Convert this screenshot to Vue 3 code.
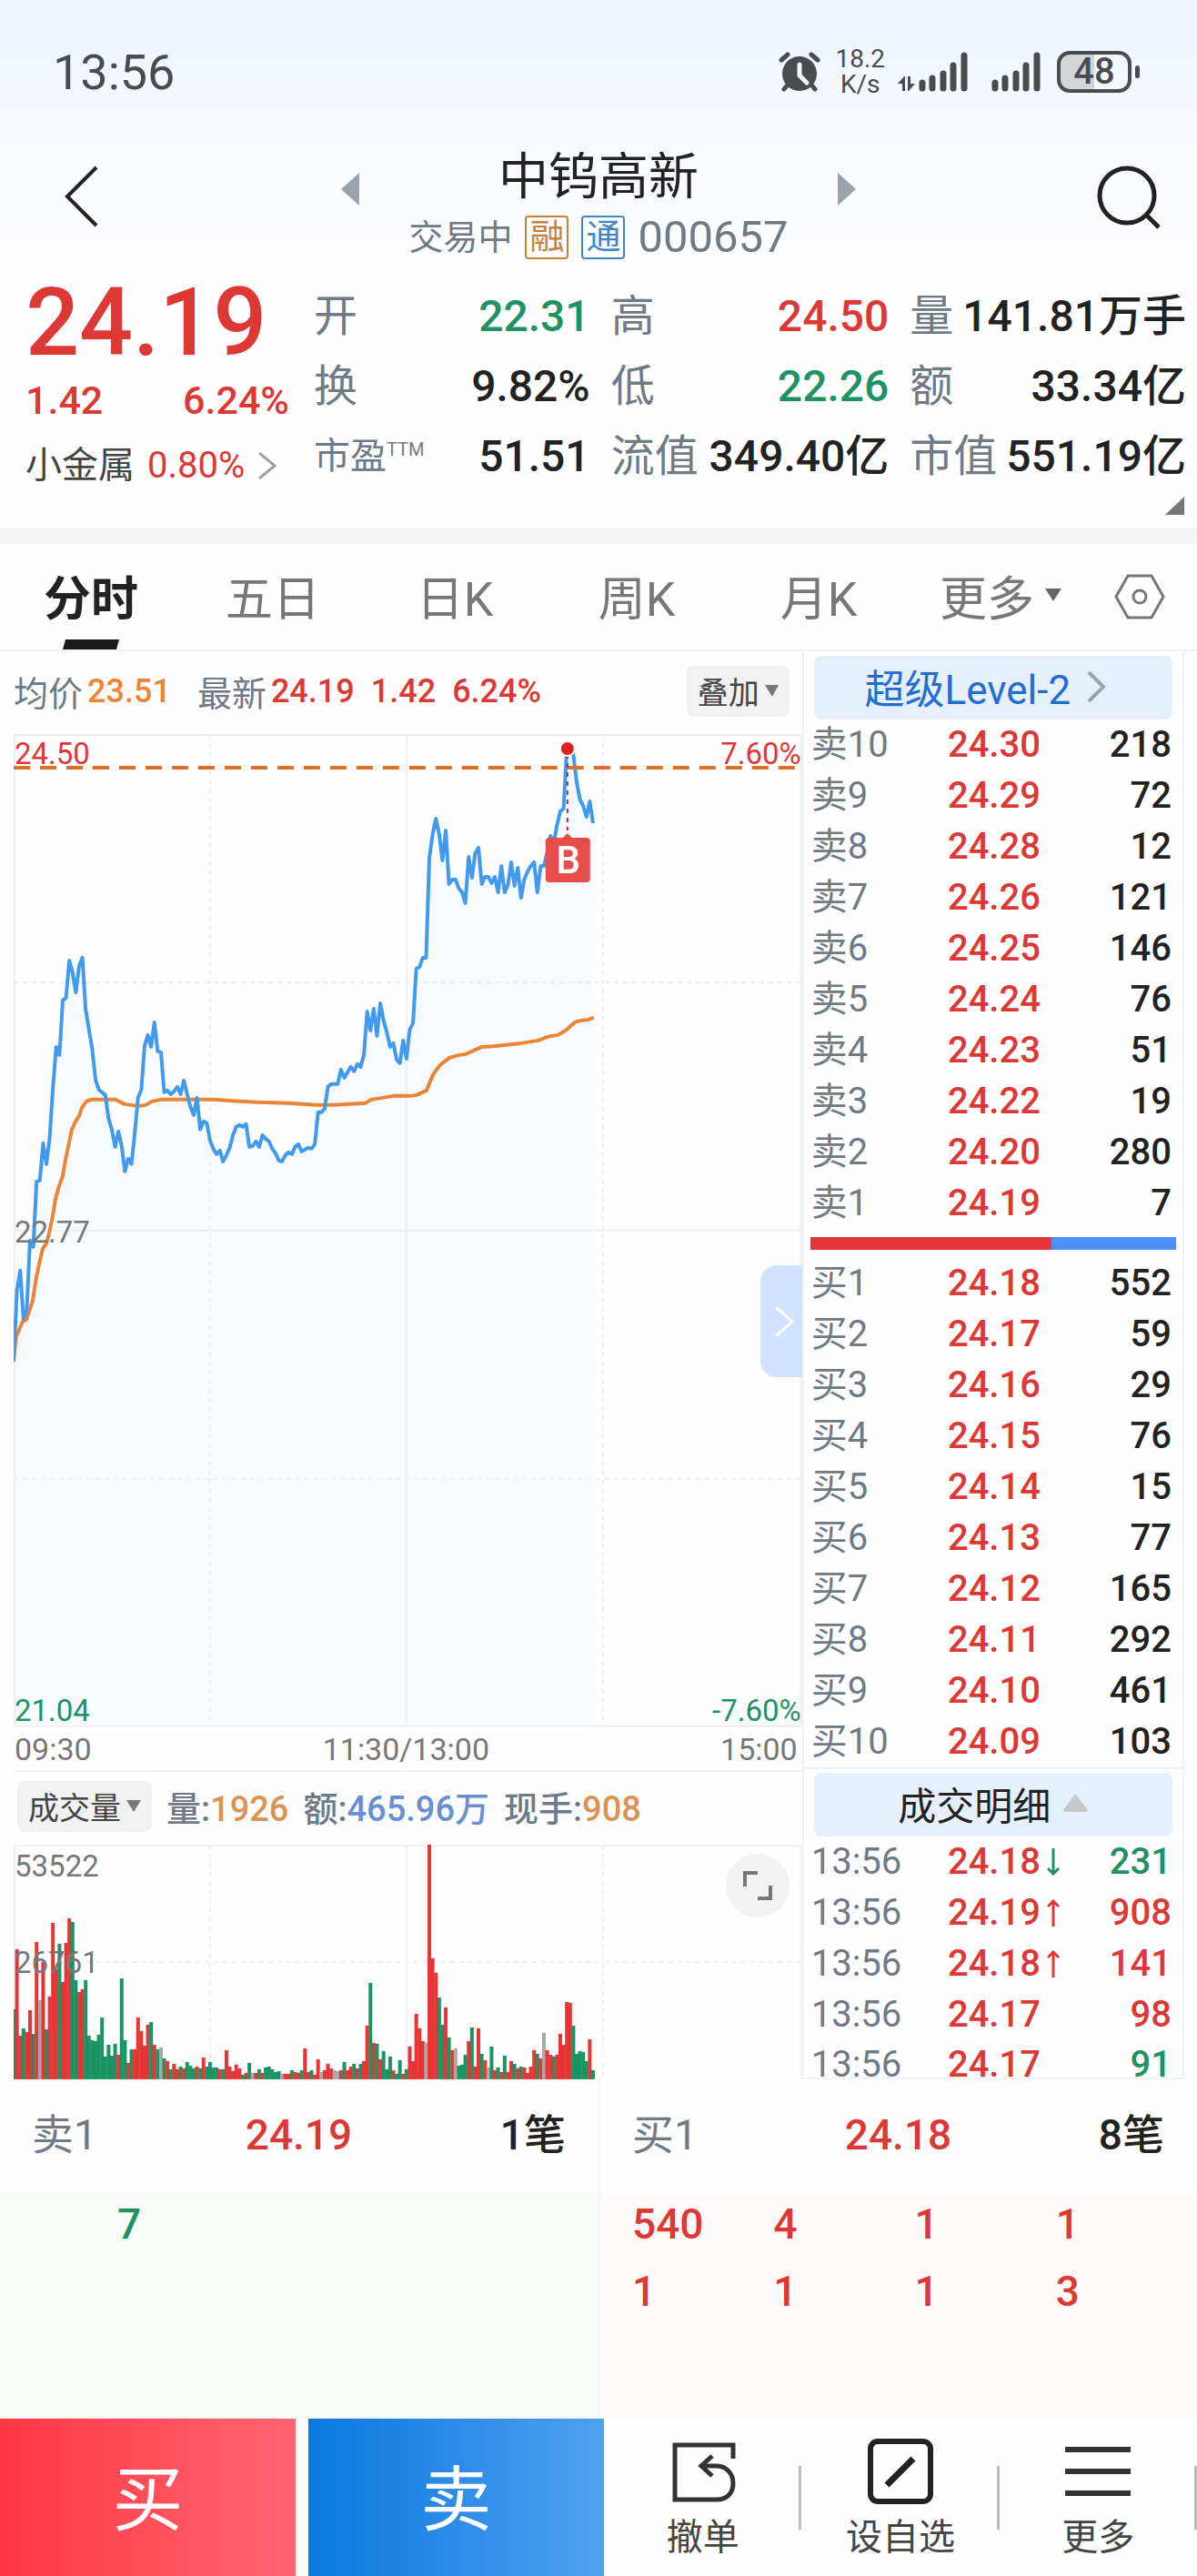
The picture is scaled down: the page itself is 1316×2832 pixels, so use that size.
<script setup>
const quotes = [
  { label: '开', value: '22.31', tone: 'down' },
  { label: '高', value: '24.50', tone: 'up' },
  { label: '量', value: '141.81万手', tone: '' },
  { label: '换', value: '9.82%', tone: '' },
  { label: '低', value: '22.26', tone: 'down' },
  { label: '额', value: '33.34亿', tone: '' },
  { label: '市盈', sup: 'TTM', value: '51.51', tone: '' },
  { label: '流值', value: '349.40亿', tone: '' },
  { label: '市值', value: '551.19亿', tone: '' },
]

const tabs = ['分时', '五日', '日K', '周K', '月K']

const asks = [
  ['卖10', '24.30', '218'],
  ['卖9', '24.29', '72'],
  ['卖8', '24.28', '12'],
  ['卖7', '24.26', '121'],
  ['卖6', '24.25', '146'],
  ['卖5', '24.24', '76'],
  ['卖4', '24.23', '51'],
  ['卖3', '24.22', '19'],
  ['卖2', '24.20', '280'],
  ['卖1', '24.19', '7'],
]

const bids = [
  ['买1', '24.18', '552'],
  ['买2', '24.17', '59'],
  ['买3', '24.16', '29'],
  ['买4', '24.15', '76'],
  ['买5', '24.14', '15'],
  ['买6', '24.13', '77'],
  ['买7', '24.12', '165'],
  ['买8', '24.11', '292'],
  ['买9', '24.10', '461'],
  ['买10', '24.09', '103'],
]

const ticks = [
  { time: '13:56', price: '24.18', dir: 'down', qty: '231', tone: 'down' },
  { time: '13:56', price: '24.19', dir: 'up', qty: '908', tone: 'up' },
  { time: '13:56', price: '24.18', dir: 'up', qty: '141', tone: 'up' },
  { time: '13:56', price: '24.17', dir: '', qty: '98', tone: 'up' },
  { time: '13:56', price: '24.17', dir: '', qty: '91', tone: 'down' },
]

const bidOrders = ['540', '4', '1', '1', '1', '1', '1', '3']

/* One sample per trading minute, 240 minutes across the chart */
const STEP = 3.6
const price = [
  690, 612, 590, 643, 633, 557, 564, 492, 491, 450, 473, 444, 389, 344, 353, 293, 290, 249, 262, 284,
  255, 246, 303, 325, 346, 380, 391, 394, 397, 423, 435, 454, 437, 453, 481, 467, 473, 439, 400, 391,
  343, 331, 344, 317, 349, 350, 394, 392, 396, 393, 388, 396, 381, 396, 410, 419, 400, 435, 426, 428,
  447, 456, 462, 458, 470, 463, 455, 441, 432, 430, 432, 429, 454, 453, 448, 454, 441, 445, 448, 456,
  461, 469, 470, 463, 460, 462, 454, 451, 459, 457, 455, 456, 451, 416, 416, 412, 388, 385, 385, 385,
  369, 378, 372, 366, 371, 363, 366, 353, 305, 326, 302, 332, 296, 315, 328, 344, 340, 358, 362, 337,
  357, 325, 318, 258, 256, 246, 246, 136, 110, 93, 110, 139, 106, 165, 160, 160, 170, 174, 186, 135,
  158, 131, 125, 165, 157, 157, 164, 157, 174, 145, 174, 166, 141, 167, 147, 180, 160, 151, 145, 141,
  174, 145, 145, 130, 112, 120, 100, 85, 82, 16, 16, 23, 53, 72, 79, 91, 74, 98,
]
const pricePoints = price.map((y, i) => `${(i * STEP).toFixed(1)},${y}`).join(' ')
const lastX = ((price.length - 1) * STEP).toFixed(1)
const areaPoints = `0,1092 ${pricePoints} ${lastX},1092`

const averagePoints =
  '0,686 3,662 10,646 14,644 21,623 25,597 28,583 32,566 36,560 39,549 43,530 46,511 50,497 54,486 57,468 ' +
  '64,435 68,426 72,420 75,411 80,404 85,402 112,402 122,407 137,409 145,408 152,404 162,402 218,402 268,405 ' +
  '302,406 332,408 352,408 387,406 393,402 418,398 436,398 443,397 454,392 461,375 465,369 469,364 479,356 ' +
  '490,353 497,352 515,344 530,343 558,340 577,337 587,333 598,331 607,326 617,317 624,315 632,314 638,312'

/* Volume bars: height plus r (rise), g (fall) or n (flat) */
const volume = (
  '77g 143r 48r 56g 52r 76r 50g 151r 87n 129r 55g 91r 172r 121r 149g 107r 150r 177r 173g 109g ' +
  '96r 99r 109g 48g 43g 42g 49g 68g 25g 38g 26g 39g 27r 111g 43g 18r 33g 33r 68r 53r ' +
  '37r 60r 63g 38r 33g 35n 23g 20r 11g 17r 11r 14g 12r 19g 15g 12g 14r 12g 24r 14g ' +
  '19g 13g 13g 11r 11g 32r 14r 9r 16r 12r 5g 7r 18g 7n 7r 11g 7r 13g 14g 11g ' +
  '8g 9g 6n 6r 6r 10g 8r 7r 10g 34r 8r 10g 5r 22r 8n 10r 17r 12r 10n 9n ' +
  '10r 19g 10r 14r 17g 12r 17g 20r 59r 106g 40r 39g 22r 31g 11g 25g 10r 6g 21g 6r ' +
  '11g 36r 20r 72r 56r 42r 40n 258r 133r 117r 90g 60g 79r 46g 32r 34n 15g 16g 27g 42r ' +
  '57g 14r 56r 28g 21r 13n 36g 10r 13g 8r 26g 8r 20r 17g 12r 14g 13r 7r 14r 32r ' +
  '28g 23r 51n 32r 27r 25g 27r 50r 38r 85r 84r 59g 28g 31g 30g 20g 44r 10g'
)
  .split(' ')
  .map((s, i) => ({ h: parseInt(s, 10), kind: s.slice(-1), x: (i * STEP - 2).toFixed(1) }))
const barColor = { r: '#e63534', g: '#1b9464', n: '#a9a9a9' }
</script>

<template>
  <div class="page">
    <header class="top">
      <div class="status">
        <span class="clock">13:56</span>
        <svg class="alarm" width="46" height="44" viewBox="0 0 46 44">
          <circle cx="23" cy="24" r="19" fill="#4a4b4c" />
          <path d="M3 9l7-6M43 9l-7-6M6 41l5-6M40 41l-5-6" stroke="#4a4b4c" stroke-width="5" stroke-linecap="round" />
          <path d="M23 14v12l8 8" fill="none" stroke="#f3f7fe" stroke-width="5" stroke-linecap="round" stroke-linejoin="round" />
        </svg>
        <span class="speed"><span>18.2</span><span>K/s</span></span>
        <svg class="signal" width="77" height="44" viewBox="0 0 77 44">
          <path d="M0 35l7-8h1v16H5v-8zM19 35l-7 8h-1V27h3v8z" fill="#4a4b4c" />
          <path d="M27 34v6M38 29v11M50 24v16M61 15v25M73 4v36" stroke="#4a4b4c" stroke-width="7" stroke-linecap="round" />
        </svg>
        <svg class="signal2" width="54" height="44" viewBox="0 0 54 44">
          <path d="M4 34v6M15 29v11M27 24v16M38 15v25M50 4v36" stroke="#4a4b4c" stroke-width="7" stroke-linecap="round" />
        </svg>
        <span class="battery">48</span>
        <i class="nub"></i>
      </div>
      <div class="title-bar">
        <button class="icon-btn back" aria-label="返回">
          <svg width="40" height="68" viewBox="0 0 40 68"><path d="M36 2L4 34l32 32" fill="none" stroke="#222" stroke-width="4" /></svg>
        </button>
        <div class="switcher">
          <button class="icon-btn" aria-label="上一只">
            <svg width="20" height="36" viewBox="0 0 20 36"><path d="M20 0v36L0 18z" fill="#9aa3ad" /></svg>
          </button>
          <div class="title">
            <h1>中钨高新</h1>
            <p class="sub">
              <span>交易中</span><b class="badge orange">融</b><b class="badge blue">通</b><span class="code">000657</span>
            </p>
          </div>
          <button class="icon-btn" aria-label="下一只">
            <svg width="20" height="36" viewBox="0 0 20 36"><path d="M0 0v36l20-18z" fill="#9aa3ad" /></svg>
          </button>
        </div>
        <button class="icon-btn search" aria-label="搜索">
          <svg width="72" height="70" viewBox="0 0 72 70">
            <circle cx="33" cy="33" r="30" fill="none" stroke="#222" stroke-width="5" />
            <path d="M54 54l14 14" stroke="#222" stroke-width="5" />
          </svg>
        </button>
      </div>
    </header>

    <section class="quote">
      <div class="last">
        <strong class="big up">24.19</strong>
        <div class="chg up"><span>1.42</span><span>6.24%</span></div>
        <a href="#" class="sector">
          小金属 <span class="up">0.80%</span>
          <svg width="22" height="30" viewBox="0 0 22 30"><path d="M2 1l17 14L2 29" fill="none" stroke="#9aa3ad" stroke-width="3" /></svg>
        </a>
      </div>
      <dl class="stats">
        <div v-for="q in quotes" :key="q.label">
          <dt :class="{ small: q.sup }">{{ q.label }}<sup v-if="q.sup">{{ q.sup }}</sup></dt>
          <dd :class="q.tone">{{ q.value }}</dd>
        </div>
      </dl>
      <svg class="corner" width="21" height="20" viewBox="0 0 21 20"><path d="M21 0v20H0z" fill="#777" /></svg>
    </section>

    <nav class="tabs">
      <button v-for="(t, i) in tabs" :key="t" :class="{ active: i === 0 }">
        {{ t }}
        <svg v-if="i === 0" class="mark" width="62" height="11" viewBox="0 0 62 11"><path d="M3 0h59l-3 11H0z" fill="#1b1b1b" /></svg>
      </button>
      <button class="more">
        更多<svg width="18" height="14" viewBox="0 0 18 14"><path d="M0 0h18L9 14z" fill="#666" /></svg>
      </button>
      <button class="gear" aria-label="设置">
        <svg width="56" height="50" viewBox="0 0 56 50">
          <path d="M15 2h26l13 23-13 23H15L2 25z" fill="none" stroke="#777" stroke-width="3" stroke-linejoin="round" />
          <circle cx="28" cy="25" r="7" fill="none" stroke="#777" stroke-width="3" />
        </svg>
      </button>
    </nav>

    <main class="board">
      <section class="left">
        <div class="info">
          <span class="muted">均价</span><b class="avg">23.51</b>
          <span class="muted latest">最新</span><b class="up">24.19</b><b class="up gap">1.42</b><b class="up gap">6.24%</b>
          <button class="chip">叠加<svg width="15" height="13" viewBox="0 0 15 13"><path d="M0 0h15L8 13z" fill="#777" /></svg></button>
        </div>

        <div class="chart">
          <svg class="plot" viewBox="0 0 867 1092">
            <polygon :points="areaPoints" fill="#f7fbff" />
            <g fill="none" stroke="#ebeff0" stroke-width="2">
              <path d="M0 546H867M432 0V1092" />
              <path d="M0 273H867M0 819H867M216 0V1092M648 0V1092" stroke-dasharray="5 5" />
              <path d="M1 1H866V1091H1z" />
            </g>
            <polyline :points="averagePoints" fill="none" stroke="#ec8436" stroke-width="4" stroke-linejoin="round" />
            <polyline :points="pricePoints" fill="none" stroke="#429aee" stroke-width="4" stroke-linejoin="round" />
            <path d="M0 37H867" stroke="#dc7028" stroke-width="4" stroke-dasharray="18 11" />
            <path d="M609 22V106" stroke="#a03040" stroke-width="2" stroke-dasharray="5 5" />
            <circle cx="609" cy="16" r="8" fill="#dc2020" stroke="#fff" stroke-width="2" />
            <path d="M603 115l6-6 6 6z" fill="#e54d4b" />
            <rect x="585" y="114" width="49" height="49" rx="4" fill="#e54d4b" />
            <text x="610" y="153" class="mark-b" text-anchor="middle">B</text>
          </svg>
          <div class="scale start"><span class="up">24.50</span><span>22.77</span><span class="down">21.04</span></div>
          <div class="scale end"><span class="up">7.60%</span><span class="down">-7.60%</span></div>
          <button class="drawer" aria-label="收起">
            <svg width="22" height="36" viewBox="0 0 22 36"><path d="M2 2l18 16L2 34" fill="none" stroke="#fff" stroke-width="3" /></svg>
          </button>
        </div>
        <div class="axis"><span>09:30</span><span>11:30/13:00</span><span>15:00</span></div>

        <div class="vol-head">
          <button class="chip">成交量<svg width="16" height="13" viewBox="0 0 16 13"><path d="M0 0h16L8 13z" fill="#777" /></svg></button>
          <span>量:<b class="sand">1926</b></span>
          <span>额:<b class="sky">465.96万</b></span>
          <span>现手:<b class="sand">908</b></span>
        </div>
        <div class="chart">
          <svg class="plot" viewBox="0 0 867 258">
            <g fill="none" stroke="#f0f1f2" stroke-width="2">
              <path d="M432 0V258M1 258V1H866V258" />
              <path d="M0 129H867M216 0V258M648 0V258" stroke-dasharray="5 5" />
            </g>
            <rect v-for="(b, i) in volume" :key="i" :x="b.x" :y="258 - b.h" width="4" :height="b.h" :fill="barColor[b.kind]" />
          </svg>
          <div class="scale vol"><span>53522</span><span>26761</span></div>
          <button class="expand" aria-label="全屏">
            <svg width="32" height="32" viewBox="0 0 32 32"><path d="M16 2H2v15M16 30h14V16" fill="none" stroke="#777" stroke-width="4" /></svg>
          </button>
        </div>
      </section>

      <aside class="right">
        <button class="level">
          超级Level-2
          <svg width="22" height="34" viewBox="0 0 22 34"><path d="M2 1l16 16L2 33" fill="none" stroke="#9aa3ad" stroke-width="4" /></svg>
        </button>
        <table class="book">
          <tbody>
            <tr v-for="r in asks" :key="r[0]"><th>{{ r[0] }}</th><td class="up">{{ r[1] }}</td><td>{{ r[2] }}</td></tr>
          </tbody>
        </table>
        <div class="ratio"><i></i></div>
        <table class="book">
          <tbody>
            <tr v-for="r in bids" :key="r[0]"><th>{{ r[0] }}</th><td class="up">{{ r[1] }}</td><td>{{ r[2] }}</td></tr>
          </tbody>
        </table>
        <div class="detail">
          <button class="level dark">
            成交明细
            <svg width="27" height="20" viewBox="0 0 27 20"><path d="M13 0l14 18-2 2H2l-2-2z" fill="#c8c8c8" /></svg>
          </button>
          <table class="book">
            <tbody>
              <tr v-for="(t, i) in ticks" :key="i">
                <th>{{ t.time }}</th>
                <td class="up">
                  {{ t.price }}<svg v-if="t.dir" :class="['arrow', t.dir]" width="14" height="30" viewBox="0 0 14 30">
                    <path :d="t.dir === 'up' ? 'M7 30V2M1 8l6-6 6 6' : 'M7 0v28M1 22l6 6 6-6'" fill="none" stroke="currentColor" stroke-width="3" />
                  </svg>
                </td>
                <td :class="t.tone">{{ t.qty }}</td>
              </tr>
            </tbody>
          </table>
        </div>
      </aside>
    </main>

    <section class="queues">
      <div class="queue">
        <div class="q-head"><span>卖1</span><b class="up">24.19</b><b>1笔</b></div>
        <div class="q-body sell"><span class="down">7</span></div>
      </div>
      <div class="queue">
        <div class="q-head"><span>买1</span><b class="up">24.18</b><b>8笔</b></div>
        <div class="q-body buy"><span v-for="(n, i) in bidOrders" :key="i" class="up">{{ n }}</span></div>
      </div>
    </section>

    <footer class="bottom">
      <button class="trade red">买</button>
      <button class="trade azure">卖</button>
      <div class="tools">
        <button>
          <svg width="72" height="72" viewBox="0 0 72 72">
            <path d="M69 22V7H5v60h46c12 0 18-8 18-18 0-11-8-19-18-19H35" fill="none" stroke="#333" stroke-width="5" />
            <path d="M46 19L34 30l12 11" fill="none" stroke="#333" stroke-width="5" />
          </svg>
          撤单
        </button>
        <button>
          <svg width="72" height="72" viewBox="0 0 72 72">
            <rect x="3" y="3" width="66" height="66" rx="8" fill="none" stroke="#222" stroke-width="6" />
            <path d="M21 51l29-29" stroke="#222" stroke-width="7" />
          </svg>
          设自选
        </button>
        <button>
          <svg width="72" height="72" viewBox="0 0 72 72"><path d="M0 12h72M0 36h72M0 60h72" stroke="#333" stroke-width="6" /></svg>
          更多
        </button>
      </div>
    </footer>
  </div>
</template>

<style>
body {
  margin: 0;
  background: #fdfefe;
}
</style>

<style scoped>
.page {
  font-family: Roboto, "Noto Sans CJK SC", sans-serif;
  color: #222;
  background: #fefefe;
}
.page * {
  box-sizing: border-box;
}
button {
  padding: 0;
  border: 0;
  background: none;
  font: inherit;
  color: inherit;
}
svg {
  display: block;
  flex: none;
}
b {
  font-weight: 500;
}
.up {
  color: #dc3836;
}
.down {
  color: #1f9163;
}
.muted {
  color: #6f7a86;
}

/* Top */
.top {
  height: 298px;
  background: linear-gradient(#eef5fe, #fefefe);
}
.status {
  display: flex;
  align-items: center;
  height: 158px;
  padding: 0 63px 0 58px;
  color: #4a4b4c;
}
.clock {
  margin-right: auto;
  font-size: 54px;
}
.speed {
  display: flex;
  flex-direction: column;
  margin: 0 14px 0 16px;
  font-size: 28px;
  line-height: 28px;
  text-align: center;
}
.signal2 {
  margin: 0 18px 0 26px;
}
.battery {
  width: 82px;
  height: 46px;
  border: 4px solid #4a4b4c;
  border-radius: 14px;
  background: linear-gradient(90deg, #d2d4d8 50%, transparent 50%);
  font-size: 40px;
  font-weight: 500;
  line-height: 38px;
  text-align: center;
}
.nub {
  width: 5px;
  height: 14px;
  margin-left: 4px;
  border-radius: 3px;
  background: #4a4b4c;
}
.title-bar {
  display: flex;
  align-items: flex-start;
  justify-content: space-between;
  padding: 0 38px 0 70px;
}
.icon-btn {
  margin-top: 32px;
}
.back,
.search {
  margin-top: 24px;
}
.switcher {
  display: flex;
  align-items: flex-start;
  justify-content: space-between;
  width: 566px;
}
.title {
  text-align: center;
}
h1 {
  margin: 0;
  font-size: 55px;
  font-weight: 400;
  line-height: 72px;
}
.sub {
  display: flex;
  align-items: center;
  justify-content: center;
  gap: 14px;
  margin: 7px 0 0;
  font-size: 38px;
  line-height: 48px;
  color: #6f7a86;
}
.badge {
  width: 48px;
  height: 48px;
  border: 2px solid;
  border-radius: 4px;
  font-size: 38px;
  font-weight: 400;
  line-height: 42px;
  text-align: center;
}
.orange {
  color: #c8803a;
}
.blue {
  color: #3f87c5;
}
.code {
  font-size: 49px;
}

/* Quote */
.quote {
  position: relative;
  display: flex;
  gap: 27px;
  height: 300px;
  padding: 12px 12px 0 28px;
  border-bottom: 18px solid #f4f4f4;
}
.last {
  flex: none;
  width: 290px;
}
.big {
  display: block;
  font-size: 104px;
  font-weight: 500;
  line-height: 90px;
}
.chg {
  display: flex;
  justify-content: space-between;
  margin-top: 16px;
  font-size: 43px;
  font-weight: 500;
  line-height: 48px;
}
.sector {
  display: flex;
  align-items: center;
  gap: 14px;
  margin-top: 24px;
  font-size: 40px;
  line-height: 48px;
  color: #444;
  text-decoration: none;
  white-space: nowrap;
}
.stats {
  flex: 1;
  display: grid;
  grid-template-columns: 304fr 306fr 304fr;
  grid-auto-rows: 77px;
  column-gap: 23px;
  margin: 0;
  font-size: 48px;
  line-height: 76px;
}
.stats div {
  display: flex;
  justify-content: space-between;
  white-space: nowrap;
}
dt {
  color: #6f7a86;
}
dt.small {
  font-size: 40px;
}
sup {
  font-size: 20px;
  line-height: 20px;
}
dd {
  margin: 0;
  font-weight: 500;
}
.corner {
  position: absolute;
  right: 14px;
  bottom: 14px;
}

/* Tabs */
.tabs {
  display: flex;
  height: 118px;
  border-bottom: 2px solid #f1f2f2;
  font-size: 52px;
  color: #777;
}
.tabs button {
  position: relative;
  flex: 1;
  display: flex;
  align-items: center;
  justify-content: center;
  padding-bottom: 4px;
}
.tabs .active {
  font-weight: 700;
  color: #222;
}
.mark {
  position: absolute;
  bottom: 0;
  left: 50%;
  margin-left: -31px;
}
.more svg {
  margin-left: 12px;
}
.tabs .gear {
  flex: 0 0 116px;
  padding: 0 10px 0 0;
}

/* Chart side */
.board {
  display: grid;
  grid-template-columns: 67% 33%;
}
.left {
  min-width: 0;
  padding-left: 15px;
}
.info,
.vol-head {
  display: flex;
  align-items: center;
  padding-bottom: 4px;
  font-size: 38px;
}
.info {
  height: 91px;
}
.info b {
  margin-left: 5px;
  font-size: 36px;
}
.info .avg {
  margin-right: 29px;
  color: #ec8436;
}
.info .gap {
  margin-left: 18px;
}
.chip {
  display: flex;
  align-items: center;
  gap: 6px;
  height: 56px;
  padding: 0 12px;
  border-radius: 8px;
  background: #f1f1f1;
  font-size: 34px;
  color: #444;
}
.info .chip {
  margin: 0 14px 0 auto;
}
.chart {
  position: relative;
}
.plot {
  width: 100%;
  height: auto;
}
.mark-b {
  font-size: 42px;
  font-weight: 500;
  fill: #fff;
}
.scale {
  position: absolute;
  top: 4px;
  bottom: 0;
  left: 1px;
  display: flex;
  flex-direction: column;
  justify-content: space-between;
  font-size: 33px;
  line-height: 36px;
  color: #777;
}
.end {
  right: 1px;
  left: auto;
  text-align: right;
}
.scale.vol {
  bottom: 110px;
  top: 6px;
}
.drawer {
  position: absolute;
  right: 0;
  top: 584px;
  display: flex;
  align-items: center;
  justify-content: center;
  width: 46px;
  height: 123px;
  padding-left: 6px;
  border-radius: 18px 0 0 18px;
  background: #d0e2fc;
}
.axis {
  display: flex;
  justify-content: space-between;
  height: 49px;
  padding: 0 5px 0 1px;
  border-bottom: 2px solid #eef1f2;
  font-size: 34px;
  line-height: 48px;
  color: #777;
}
.vol-head {
  gap: 16px;
  height: 80px;
  padding-left: 4px;
  font-weight: 500;
  color: #6f7a86;
}
.vol-head .chip {
  font-weight: 400;
}
.sand {
  color: #db9355;
}
.sky {
  color: #678fd2;
}
.expand {
  position: absolute;
  top: 10px;
  right: 14px;
  display: flex;
  align-items: center;
  justify-content: center;
  width: 70px;
  height: 70px;
  border-radius: 50%;
  background: #f2f2f2;
}

/* Order book */
.right {
  margin-right: 14px;
  padding-top: 5px;
  border: solid #f1f2f2;
  border-width: 0 2px 2px;
}
.level {
  display: flex;
  align-items: center;
  justify-content: center;
  gap: 18px;
  width: calc(100% - 22px);
  height: 70px;
  margin-left: 11px;
  padding: 0 16px 2px 0;
  border-radius: 8px;
  background: #e6f0fc;
  font-size: 44px;
  color: #246dd0;
}
.dark {
  gap: 14px;
  padding: 0 0 4px;
  font-size: 42px;
  color: #222;
}
.book {
  width: 100%;
  table-layout: fixed;
  border-collapse: collapse;
  font-size: 40px;
  font-weight: 500;
  line-height: 56px;
}
.book th {
  width: 38%;
  padding: 0 0 0 8px;
  font-weight: 400;
  text-align: left;
  color: #6f7a86;
}
.book td {
  padding: 0;
}
.book td:last-child {
  padding-right: 12px;
  text-align: right;
}
.ratio {
  height: 14px;
  margin: 9px 7px;
  background: #4c90fb;
}
.ratio i {
  display: block;
  width: 66%;
  height: 100%;
  background: #e63534;
}
.detail {
  padding-top: 4px;
  border-top: 2px solid #f1f2f2;
}
.detail tr:last-child > * {
  padding-top: 13px;
  line-height: 28px;
}
.arrow {
  display: inline-block;
  margin-left: 7px;
  vertical-align: -2px;
}

/* Queues */
.queues {
  display: grid;
  grid-template-columns: 1fr 1fr;
  font-size: 46px;
}
.queue + .queue {
  border-left: 2px solid #f3f3f3;
}
.q-head {
  display: grid;
  grid-template-columns: 1fr auto 1fr;
  height: 124px;
  padding: 0 36px 0 35px;
  line-height: 122px;
}
.q-head span {
  color: #6f7a86;
}
.q-head b:last-child {
  text-align: right;
}
.q-body {
  display: grid;
  grid-template-columns: repeat(4, 1fr);
  grid-auto-rows: 74px;
  height: 249px;
  font-weight: 500;
  line-height: 70px;
}
.sell {
  padding-left: 129px;
  background: #f9fbf9;
}
.buy {
  padding-left: 35px;
  background: #fffafa;
}

/* Bottom bar */
.bottom {
  display: flex;
  height: 173px;
}
.trade {
  flex: 325;
  margin-right: 14px;
  padding-bottom: 8px;
  font-size: 78px;
  color: #fff;
}
.red {
  background: linear-gradient(90deg, #ff3745, #ff6670);
}
.azure {
  margin-right: 0;
  background: linear-gradient(90deg, #0a78de, #50a0f0);
}
.tools {
  flex: 652;
  display: flex;
  align-items: center;
}
.tools button {
  flex: 1;
  display: flex;
  flex-direction: column;
  align-items: center;
  gap: 12px;
  height: 173px;
  padding-top: 22px;
  background: linear-gradient(#bbb, #bbb) right center / 3px 70px no-repeat;
  font-size: 40px;
  line-height: 50px;
  color: #444;
}
</style>
